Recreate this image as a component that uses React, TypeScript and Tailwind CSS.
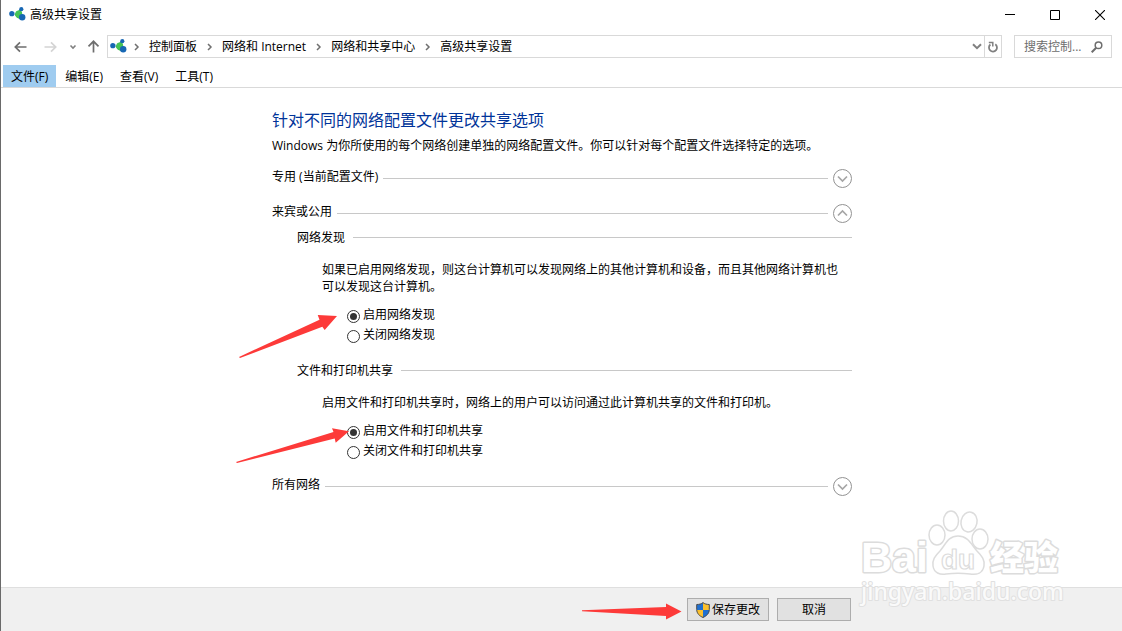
import { useState } from "react";
import type { ReactNode } from "react";

function NetworkIcon() {
  return (
    <svg width="18" height="16" viewBox="0 0 18 16" className="shrink-0" aria-hidden="true">
      <path d="M3 6.500 12 2l1 9z" fill="#9fd3e6" opacity="0.500" />
      <path d="M5.600 7 10.500 2.800c2.200 1.200 3.400 5 2.400 9.200-4 0-6.600-2-7.300-5z" fill="#3dbb52" />
      <circle cx="9.800" cy="7" r="3.400" fill="#46c456" />
      <circle cx="2.800" cy="6.700" r="2.600" fill="#1767b4" />
      <circle cx="12.300" cy="2.200" r="2.100" fill="#1767b4" />
      <circle cx="13.200" cy="10.200" r="3.200" fill="#1767b4" />
    </svg>
  );
}

function Crumb({ children }: { children: ReactNode }) {
  return (
    <li className="flex items-center">
      <svg width="25" height="10" viewBox="0 0 25 10" fill="none" stroke="#707070" strokeWidth="1.5" aria-hidden="true">
        <path d="M11 2l3 3-3 3" />
      </svg>
      <a href="#" className="whitespace-nowrap">{children}</a>
    </li>
  );
}

function ProfileRow({ title, open, onToggle }: { title: string; open: boolean; onToggle: () => void }) {
  return (
    <div className="flex h-5 items-center gap-[5px]">
      <h2 className="pb-[2px]">{title}</h2>
      <span className="h-px flex-1 bg-[#c8c8c8]" />
      <button type="button" aria-label={title} aria-expanded={open} onClick={onToggle}>
        <svg width="19" height="19" viewBox="0 0 19 19" fill="none" stroke="#929292" className="block">
          <circle cx="9.500" cy="9.500" r="9" />
          <path d={open ? "M5 11.500l4.500-4.500 4.500 4.500" : "M5 7.500l4.500 4.500 4.500-4.500"} stroke="#a6a6a6" strokeWidth="1.700" />
        </svg>
      </button>
    </div>
  );
}

function OptionGroup({
  title,
  description,
  name,
  options,
  arrow,
}: {
  title: string;
  description: string;
  name: string;
  options: string[];
  arrow: ReactNode;
}) {
  return (
    <section className="pl-[25px]">
      <div className="flex h-4 items-center gap-2">
        <h3 className="pt-px">{title}</h3>
        <span className="h-px flex-1 bg-[#c8c8c8]" />
      </div>
      <p className="mt-4 pr-2 pl-[25px] leading-[17px]">{description}</p>
      <div role="radiogroup" aria-label={title} className="relative mt-[10px] ml-[50px]">
        {options.map((option, i) => (
          <label key={option} className="flex h-5 items-center gap-[3px]">
            <input
              type="radio"
              name={name}
              defaultChecked={i === 0}
              className="mt-[3px] grid size-[13px] shrink-0 appearance-none place-items-center rounded-full border border-[#333] bg-white before:size-[7px] before:rounded-full checked:before:bg-[#333]"
            />
            {option}
          </label>
        ))}
        {arrow}
      </div>
    </section>
  );
}

function Shield() {
  return (
    <svg width="14" height="16" viewBox="0 0 14 16" aria-hidden="true">
      <path d="M7 .5C5.500 1.900 3.200 2.500.8 2.500V8H7z" fill="#1f6fd0" />
      <path d="M7 .5c1.500 1.400 3.800 2 6.200 2V8H7z" fill="#fbc02d" />
      <path d="M.8 8H7v7.500C3.600 14 .8 11.800.8 8z" fill="#fbc02d" />
      <path d="M7 8h6.200c0 3.800-2.800 6-6.200 7.500z" fill="#1f6fd0" />
      <path d="M7 .6C5.500 1.900 3.200 2.500.7 2.500v5C.7 11.500 3.600 14 7 15.500c3.400-1.500 6.300-4 6.300-8v-5C10.800 2.500 8.500 1.900 7 .6z" fill="none" stroke="#4a4a4a" />
    </svg>
  );
}

function Watermark() {
  return (
    <svg
      width="212"
      height="104"
      viewBox="0 0 212 104"
      className="pointer-events-none absolute right-[54px] bottom-[20px]"
      fill="#fff"
      stroke="#dcdcdc"
      strokeWidth="2"
      strokeLinejoin="round"
      aria-hidden="true"
    >
      <g style={{ paintOrder: "stroke" }} strokeWidth="3">
        <text x="5" y="65" fontSize="43" fontWeight="700" fontFamily="Liberation Sans, sans-serif">Bai</text>
        <text x="134" y="63" fontSize="34" fontWeight="900" fontFamily="Noto Sans CJK SC, sans-serif">经验</text>
      </g>
      <g strokeWidth="1.500">
        <ellipse cx="81" cy="28" rx="8" ry="10" />
        <ellipse cx="95" cy="14" rx="7.500" ry="10" />
        <ellipse cx="113" cy="15" rx="8" ry="10" transform="rotate(12 113 15)" />
        <ellipse cx="124" cy="32" rx="8" ry="10" />
        <path d="M102 29c-10 0-12 8-18 15-5 5-8 9-7 15 1 7 7 9 13 8 8-1 16-1 24 0 7 1 13-1 14-8 1-6-2-10-7-15-6-7-9-15-19-15z" />
      </g>
      <text x="85" y="62" fontSize="28" strokeWidth="1.200" fontWeight="700" fontFamily="Liberation Sans, sans-serif">du</text>
      <text x="5" y="93" fontSize="23" fill="#fafafa" stroke="#e0e0e0" style={{ paintOrder: "stroke" }} fontWeight="500" fontFamily="Noto Sans, sans-serif">jingyan.baidu.com</text>
    </svg>
  );
}

export default function App() {
  const [open, setOpen] = useState([false, true, false]);
  const toggle = (index: number) => setOpen(open.map((value, i) => (i === index ? !value : value)));

  return (
    <div className="relative flex min-h-screen flex-col border-l border-[#6a6a6a] bg-white font-['Open_Sans','Noto_Sans_CJK_SC',sans-serif] text-[12px] leading-4 text-black">
      <header>
        <div className="flex h-[30px] items-center pl-2">
          <NetworkIcon />
          <h1 className="ml-[3px] flex-1">高级共享设置</h1>
          <div className="flex">
            <button type="button" aria-label="最小化" className="grid h-[30px] w-[45px] place-items-center">
              <svg width="10" height="10" viewBox="0 0 10 10" stroke="#000"><path d="M0 4.500h10" /></svg>
            </button>
            <button type="button" aria-label="最大化" className="grid h-[30px] w-[45px] place-items-center">
              <svg width="10" height="10" viewBox="0 0 10 10" fill="none" stroke="#000"><path d="M.5.5h9v9h-9z" /></svg>
            </button>
            <button type="button" aria-label="关闭" className="grid h-[30px] w-[45px] place-items-center">
              <svg width="10" height="10" viewBox="0 0 10 10" stroke="#000" strokeWidth="1.100"><path d="M0 0l10 10M10 0L0 10" /></svg>
            </button>
          </div>
        </div>

        <div className="flex h-[33px] items-center pr-[10px] pl-[13px]">
          <button type="button" aria-label="后退">
            <svg width="13" height="12" viewBox="0 0 13 12" fill="none" stroke="#6e6e6e" strokeWidth="1.700"><path d="M12.500 6H1.500M6 1.300L1.300 6 6 10.700" /></svg>
          </button>
          <button type="button" aria-label="前进" className="ml-[17px]">
            <svg width="13" height="12" viewBox="0 0 13 12" fill="none" stroke="#d4d4d4" strokeWidth="1.700"><path d="M.5 6h11M7 1.300L11.700 6 7 10.700" /></svg>
          </button>
          <button type="button" aria-label="最近浏览的位置" className="ml-[12px]">
            <svg width="8" height="6" viewBox="0 0 8 6" fill="none" stroke="#808080" strokeWidth="1.600"><path d="M1.500 1.500L4 4l2.500-2.500" /></svg>
          </button>
          <button type="button" aria-label="上移" className="ml-[10px]">
            <svg width="13" height="13" viewBox="0 0 13 13" fill="none" stroke="#6e6e6e" strokeWidth="1.700"><path d="M6.500 12.500v-11M1.500 6.300l5-5 5 5" /></svg>
          </button>
          <div className="ml-[7px] flex h-[23px] flex-1 items-center border border-[#d9d9d9]">
            <nav aria-label="路径" className="flex flex-1 items-center pl-[2px]">
              <NetworkIcon />
              <ol className="-ml-1 flex items-center">
                <Crumb>控制面板</Crumb>
                <Crumb>网络和 Internet</Crumb>
                <Crumb>网络和共享中心</Crumb>
                <Crumb>高级共享设置</Crumb>
              </ol>
            </nav>
            <button type="button" aria-label="以前的位置" className="grid w-[14px] place-items-center">
              <svg width="10" height="7" viewBox="0 0 10 7" fill="none" stroke="#808080" strokeWidth="2"><path d="M1 1.200l4 4 4-4" /></svg>
            </button>
            <button type="button" aria-label="刷新" className="grid h-full w-[17px] place-items-center border-l border-[#d9d9d9]">
              <svg width="12" height="12" viewBox="0 0 12 12" fill="none" stroke="#808080" strokeWidth="1.800"><path d="M8.300 3.300A4 4 0 1 1 3.400 3.500" /><path d="M1.800 1.600h4v3.800" strokeWidth="1.500" /></svg>
            </button>
          </div>
          <div className="ml-3 flex h-[23px] w-[98px] items-center border border-[#d9d9d9] pr-2 pl-[9px]">
            <input type="text" aria-label="搜索控制面板" placeholder="搜索控制..." className="min-w-0 flex-1 bg-transparent outline-none placeholder:text-[#6d6d6d]" />
            <svg width="12" height="12" viewBox="0 0 12 12" fill="none" stroke="#6e6e6e" strokeWidth="1.500" aria-hidden="true"><circle cx="7.500" cy="4.300" r="3.300" /><path d="M5.200 6.700L.7 11.200" strokeWidth="2" /></svg>
          </div>
        </div>

        <div role="menubar" className="mt-[2px] flex h-[23px] gap-px border-b border-[#d9d9d9] pl-[2px]">
          <button type="button" role="menuitem" className="bg-[#9fccf0] px-2 pt-px">文件(F)</button>
          <button type="button" role="menuitem" className="px-2 pt-px">编辑(E)</button>
          <button type="button" role="menuitem" className="px-2 pt-px">查看(V)</button>
          <button type="button" role="menuitem" className="px-2 pt-px">工具(T)</button>
        </div>
      </header>

      <main className="flex-1">
        <div className="mx-auto max-w-[581px] pt-5 pl-px">
          <p className="text-[16px] leading-6 text-[#003399]">针对不同的网络配置文件更改共享选项</p>
          <p className="mt-[5px] leading-[18px]">Windows 为你所使用的每个网络创建单独的网络配置文件。你可以针对每个配置文件选择特定的选项。</p>
          <div className="mt-[13px] mb-[15px]">
            <ProfileRow title="专用 (当前配置文件)" open={open[0]} onToggle={() => toggle(0)} />
          </div>
          <ProfileRow title="来宾或公用" open={open[1]} onToggle={() => toggle(1)} />
          {open[1] && (
            <div className="mt-[6px] flex flex-col gap-[17px]">
              <OptionGroup
                title="网络发现"
                name="discovery"
                description="如果已启用网络发现，则这台计算机可以发现网络上的其他计算机和设备，而且其他网络计算机也可以发现这台计算机。"
                options={["启用网络发现", "关闭网络发现"]}
                arrow={
                  <svg width="98" height="43" viewBox="0 0 98 43" fill="#fd3a39" className="absolute top-[10px] right-full mr-[10px]" aria-hidden="true">
                    <path d="M0 42L80.500 4.700 78.700 0 98 1 85.700 15l-2.400-3.300L1 43z" />
                  </svg>
                }
              />
              <OptionGroup
                title="文件和打印机共享"
                name="sharing"
                description="启用文件和打印机共享时，网络上的用户可以访问通过此计算机共享的文件和打印机。"
                options={["启用文件和打印机共享", "关闭文件和打印机共享"]}
                arrow={
                  <svg width="114" height="35" viewBox="0 0 114 35" fill="#fd3a39" className="absolute top-[7px] right-full -mr-[3px]" aria-hidden="true">
                    <path d="M0 34L97.500 4 96 .3l17 3L99.700 14.700l-1-4.200L1 35z" />
                  </svg>
                }
              />
            </div>
          )}
          <div className="mt-[15px]">
            <ProfileRow title="所有网络" open={open[2]} onToggle={() => toggle(2)} />
          </div>
        </div>
      </main>

      <footer className="border-t border-[#dfdfdf] bg-[#f0f0f0]">
        <div className="mx-auto flex h-[43px] max-w-[581px] items-center justify-end pr-px">
          <svg width="100" height="17" viewBox="0 0 100 17" fill="#fd3a39" className="mt-1 mr-[5px]" aria-hidden="true">
            <path d="M0 7.300L84 4V.5L99.500 8.500 84 16.500V13L0 8.300z" />
          </svg>
          <button type="button" className="mr-2 flex h-[23px] w-[82px] items-center justify-center gap-[2px] border border-[#adadad] bg-[#e1e1e1]">
            <Shield />
            保存更改
          </button>
          <button type="button" className="h-[23px] w-[74px] border border-[#adadad] bg-[#e1e1e1]">取消</button>
        </div>
      </footer>
      <Watermark />
    </div>
  );
}
